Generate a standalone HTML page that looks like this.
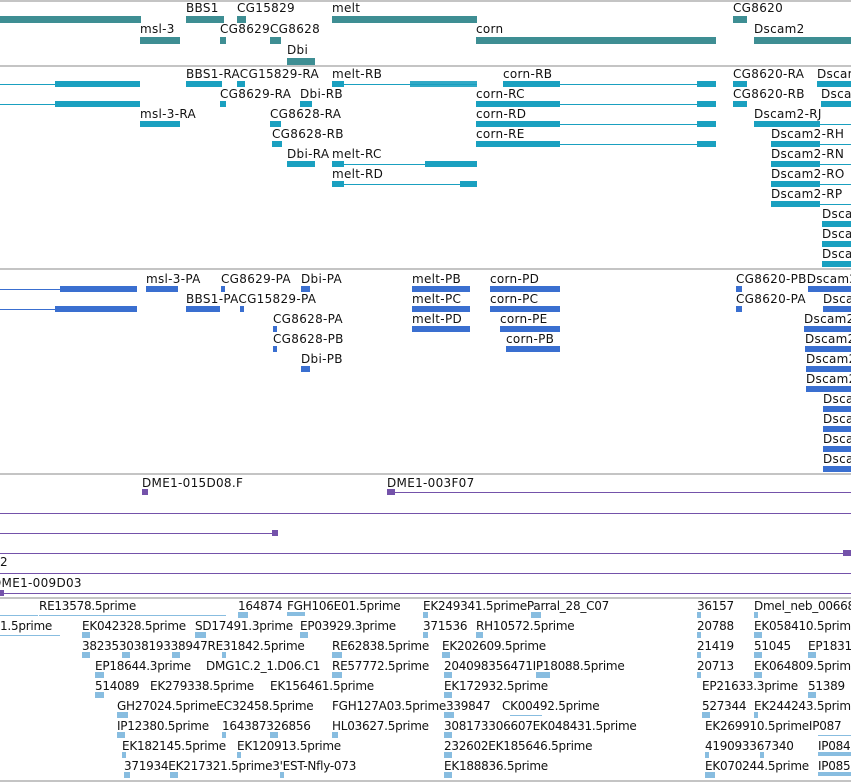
<!DOCTYPE html>
<html><head><meta charset="utf-8"><style>
body{margin:0;width:851px;height:782px;background:#fff;position:relative;overflow:hidden;font-family:"DejaVu Sans","Liberation Sans",sans-serif;font-size:12px;letter-spacing:0.3px;color:#111}
span{position:absolute;line-height:14px;white-space:nowrap}
.c span{font-size:12px;letter-spacing:-0.25px}
i{position:absolute;display:block}
.s{left:0;width:851px;height:2px;background:#c4c4c4}
.a{background:#3e8e93;height:7px}
.b{background:#1aa0c0;height:6px}
.bl{background:#1aa0c0;height:1px}
.p{background:#3a6fd0;height:6px}
.pl{background:#3a6fd0;height:1px}
.v{background:#7452aa;height:1px}
.e{background:#88bde0;height:6px}
.el{background:#88bde0;height:1px}
</style></head><body>
<i class="s" style="top:0"></i>
<!-- track1 -->
<i class="a" style="left:0;top:16px;width:141px"></i>
<span style="left:186px;top:1px">BBS1</span><i class="a" style="left:186px;top:16px;width:38px"></i>
<span style="left:237px;top:1px">CG15829</span><i class="a" style="left:237px;top:16px;width:9px"></i>
<span style="left:332px;top:1px">melt</span><i class="a" style="left:332px;top:16px;width:145px"></i>
<span style="left:733px;top:1px">CG8620</span><i class="a" style="left:733px;top:16px;width:14px"></i>
<span style="left:140px;top:22px">msl-3</span><i class="a" style="left:140px;top:37px;width:40px"></i>
<span style="left:220px;top:22px">CG8629</span><i class="a" style="left:220px;top:37px;width:6px"></i>
<span style="left:270px;top:22px">CG8628</span><i class="a" style="left:270px;top:37px;width:11px"></i>
<span style="left:476px;top:22px">corn</span><i class="a" style="left:476px;top:37px;width:240px"></i>
<span style="left:754px;top:22px">Dscam2</span><i class="a" style="left:754px;top:37px;width:97px"></i>
<span style="left:287px;top:43px">Dbi</span><i class="a" style="left:287px;top:58px;width:28px"></i>
<i class="s" style="top:65px"></i>
<!-- track2 -->
<i class="bl" style="left:0;top:84px;width:140px"></i><i class="b" style="left:55px;top:81px;width:85px"></i>
<span style="left:186px;top:67px">BBS1-RACG15829-RA</span><i class="b" style="left:186px;top:81px;width:36px"></i><i class="b" style="left:237px;top:81px;width:8px"></i>
<span style="left:332px;top:67px">melt-RB</span><i class="b" style="left:332px;top:81px;width:12px"></i><i class="bl" style="left:332px;top:84px;width:145px"></i><i class="b" style="left:410px;top:81px;width:67px;opacity:.9"></i>
<span style="left:503px;top:67px">corn-RB</span><i class="b" style="left:503px;top:81px;width:57px"></i><i class="bl" style="left:503px;top:84px;width:213px"></i><i class="b" style="left:697px;top:81px;width:19px"></i>
<span style="left:733px;top:67px">CG8620-RA</span><i class="b" style="left:733px;top:81px;width:14px"></i>
<span style="left:817px;top:67px">Dscam</span><i class="b" style="left:817px;top:81px;width:34px"></i>
<i class="bl" style="left:0;top:104px;width:140px"></i><i class="b" style="left:55px;top:101px;width:85px"></i>
<span style="left:220px;top:87px">CG8629-RA</span><i class="b" style="left:220px;top:101px;width:6px"></i>
<span style="left:300px;top:87px">Dbi-RB</span><i class="b" style="left:300px;top:101px;width:12px"></i>
<span style="left:476px;top:87px">corn-RC</span><i class="b" style="left:476px;top:101px;width:84px"></i><i class="bl" style="left:476px;top:104px;width:240px"></i><i class="b" style="left:697px;top:101px;width:19px"></i>
<span style="left:733px;top:87px">CG8620-RB</span><i class="b" style="left:733px;top:101px;width:14px"></i>
<span style="left:821px;top:87px">Dscam</span><i class="b" style="left:821px;top:101px;width:30px"></i>
<span style="left:140px;top:107px">msl-3-RA</span><i class="b" style="left:140px;top:121px;width:40px"></i>
<span style="left:270px;top:107px">CG8628-RA</span><i class="b" style="left:270px;top:121px;width:11px"></i>
<span style="left:476px;top:107px">corn-RD</span><i class="b" style="left:476px;top:121px;width:84px"></i><i class="bl" style="left:476px;top:124px;width:240px"></i><i class="b" style="left:697px;top:121px;width:19px"></i>
<span style="left:754px;top:107px">Dscam2-RJ</span><i class="b" style="left:754px;top:121px;width:66px"></i><i class="bl" style="left:754px;top:124px;width:97px"></i>
<span style="left:272px;top:127px">CG8628-RB</span><i class="b" style="left:272px;top:141px;width:10px"></i>
<span style="left:476px;top:127px">corn-RE</span><i class="b" style="left:476px;top:141px;width:84px"></i><i class="bl" style="left:476px;top:144px;width:240px"></i><i class="b" style="left:697px;top:141px;width:19px"></i>
<span style="left:771px;top:127px">Dscam2-RH</span><i class="b" style="left:771px;top:141px;width:49px"></i><i class="bl" style="left:771px;top:144px;width:80px"></i>
<span style="left:287px;top:147px">Dbi-RA</span><i class="b" style="left:287px;top:161px;width:28px"></i>
<span style="left:332px;top:147px">melt-RC</span><i class="b" style="left:332px;top:161px;width:12px"></i><i class="bl" style="left:332px;top:164px;width:145px"></i><i class="b" style="left:425px;top:161px;width:52px"></i>
<span style="left:771px;top:147px">Dscam2-RN</span><i class="b" style="left:771px;top:161px;width:49px"></i><i class="bl" style="left:771px;top:164px;width:80px"></i>
<span style="left:332px;top:167px">melt-RD</span><i class="b" style="left:332px;top:181px;width:12px"></i><i class="bl" style="left:332px;top:184px;width:145px"></i><i class="b" style="left:460px;top:181px;width:17px"></i>
<span style="left:771px;top:167px">Dscam2-RO</span><i class="b" style="left:771px;top:181px;width:49px"></i><i class="bl" style="left:771px;top:184px;width:80px"></i>
<span style="left:771px;top:187px">Dscam2-RP</span><i class="b" style="left:771px;top:201px;width:49px"></i><i class="bl" style="left:771px;top:204px;width:80px"></i>
<span style="left:822px;top:207px">Dsca</span><i class="b" style="left:822px;top:221px;width:29px"></i>
<span style="left:822px;top:227px">Dsca</span><i class="b" style="left:822px;top:241px;width:29px"></i>
<span style="left:822px;top:247px">Dsca</span><i class="b" style="left:822px;top:261px;width:29px"></i>
<i class="s" style="top:268px"></i>
<!-- track3 -->
<i class="pl" style="left:0;top:289px;width:137px"></i><i class="p" style="left:60px;top:286px;width:77px"></i>
<span style="left:146px;top:272px">msl-3-PA</span><i class="p" style="left:146px;top:286px;width:32px"></i>
<span style="left:221px;top:272px">CG8629-PA</span><i class="p" style="left:221px;top:286px;width:4px"></i>
<span style="left:301px;top:272px">Dbi-PA</span><i class="p" style="left:301px;top:286px;width:9px"></i>
<span style="left:412px;top:272px">melt-PB</span><i class="p" style="left:412px;top:286px;width:58px"></i>
<span style="left:490px;top:272px">corn-PD</span><i class="p" style="left:490px;top:286px;width:70px"></i>
<span style="left:736px;top:272px">CG8620-PBDscam2</span><i class="p" style="left:736px;top:286px;width:6px"></i><i class="p" style="left:808px;top:286px;width:43px"></i>
<i class="pl" style="left:0;top:309px;width:137px"></i><i class="p" style="left:55px;top:306px;width:82px"></i>
<span style="left:186px;top:292px">BBS1-PACG15829-PA</span><i class="p" style="left:186px;top:306px;width:34px"></i><i class="p" style="left:240px;top:306px;width:4px"></i>
<span style="left:412px;top:292px">melt-PC</span><i class="p" style="left:412px;top:306px;width:58px"></i>
<span style="left:490px;top:292px">corn-PC</span><i class="p" style="left:490px;top:306px;width:70px"></i>
<span style="left:736px;top:292px">CG8620-PA</span><i class="p" style="left:736px;top:306px;width:6px"></i>
<span style="left:823px;top:292px">Dsca</span><i class="p" style="left:823px;top:306px;width:28px"></i>
<span style="left:273px;top:312px">CG8628-PA</span><i class="p" style="left:273px;top:326px;width:4px"></i>
<span style="left:412px;top:312px">melt-PD</span><i class="p" style="left:412px;top:326px;width:58px"></i>
<span style="left:500px;top:312px">corn-PE</span><i class="p" style="left:500px;top:326px;width:60px"></i>
<span style="left:804px;top:312px">Dscam2</span><i class="p" style="left:804px;top:326px;width:47px"></i>
<span style="left:273px;top:332px">CG8628-PB</span><i class="p" style="left:273px;top:346px;width:4px"></i>
<span style="left:506px;top:332px">corn-PB</span><i class="p" style="left:506px;top:346px;width:54px"></i>
<span style="left:805px;top:332px">Dscam2</span><i class="p" style="left:805px;top:346px;width:46px"></i>
<span style="left:301px;top:352px">Dbi-PB</span><i class="p" style="left:301px;top:366px;width:9px"></i>
<span style="left:806px;top:352px">Dscam2</span><i class="p" style="left:806px;top:366px;width:45px"></i>
<span style="left:806px;top:372px">Dscam2</span><i class="p" style="left:806px;top:386px;width:45px"></i>
<span style="left:823px;top:392px">Dsca</span><i class="p" style="left:823px;top:406px;width:28px"></i>
<span style="left:823px;top:412px">Dsca</span><i class="p" style="left:823px;top:426px;width:28px"></i>
<span style="left:823px;top:432px">Dsca</span><i class="p" style="left:823px;top:446px;width:28px"></i>
<span style="left:823px;top:452px">Dsca</span><i class="p" style="left:823px;top:466px;width:28px"></i>
<i class="s" style="top:473px"></i>
<!-- purple -->
<span style="left:142px;top:476px">DME1-015D08.F</span><i class="v" style="left:142px;top:489px;width:6px;height:6px;background:#7452aa"></i>
<span style="left:387px;top:476px">DME1-003F07</span><i class="v" style="left:387px;top:489px;width:8px;height:6px"></i><i class="v" style="left:387px;top:492px;width:464px"></i>
<i class="v" style="left:0;top:513px;width:851px"></i>
<i class="v" style="left:0;top:533px;width:278px"></i><i class="v" style="left:272px;top:530px;width:6px;height:6px"></i>
<i class="v" style="left:0;top:553px;width:851px"></i><i class="v" style="left:843px;top:550px;width:8px;height:6px"></i>
<span style="left:0;top:555px">2</span>
<i class="v" style="left:0;top:573px;width:851px"></i>
<span style="left:-8px;top:576px">DME1-009D03</span>
<i class="v" style="left:0;top:593px;width:851px"></i><i class="v" style="left:0;top:590px;width:4px;height:6px"></i>
<i class="s" style="top:597px"></i>
<!-- EST -->
<div class="c">
<span style="left:39px;top:599px">RE13578.5prime</span><span style="left:238px;top:599px">164874</span><span style="left:287px;top:599px">FGH106E01.5prime</span><span style="left:423px;top:599px">EK249341.5primeParral_28_C07</span><span style="left:697px;top:599px">36157</span><span style="left:754px;top:599px">Dmel_neb_00668</span>
<span style="left:0;top:619px">1.5prime</span><span style="left:82px;top:619px">EK042328.5prime</span><span style="left:195px;top:619px">SD17491.3prime</span><span style="left:300px;top:619px">EP03929.3prime</span><span style="left:423px;top:619px">371536</span><span style="left:476px;top:619px">RH10572.5prime</span><span style="left:697px;top:619px">20788</span><span style="left:754px;top:619px">EK058410.5prime</span>
<span style="left:82px;top:639px">38235303819338947RE31842.5prime</span><span style="left:332px;top:639px">RE62838.5prime</span><span style="left:442px;top:639px">EK202609.5prime</span><span style="left:697px;top:639px">21419</span><span style="left:754px;top:639px">51045</span><span style="left:808px;top:639px">EP1831</span>
<span style="left:95px;top:659px">EP18644.3prime</span><span style="left:206px;top:659px">DMG1C.2_1.D06.C1</span><span style="left:332px;top:659px">RE57772.5prime</span><span style="left:444px;top:659px">204098356471IP18088.5prime</span><span style="left:697px;top:659px">20713</span><span style="left:754px;top:659px">EK064809.5prime</span>
<span style="left:95px;top:679px">514089</span><span style="left:150px;top:679px">EK279338.5prime</span><span style="left:270px;top:679px">EK156461.5prime</span><span style="left:444px;top:679px">EK172932.5prime</span><span style="left:702px;top:679px">EP21633.3prime</span><span style="left:808px;top:679px">51389</span>
<span style="left:117px;top:699px">GH27024.5primeEC32458.5prime</span><span style="left:332px;top:699px">FGH127A03.5prime339847</span><span style="left:502px;top:699px">CK00492.5prime</span><span style="left:702px;top:699px">527344</span><span style="left:754px;top:699px">EK244243.5prime</span>
<span style="left:117px;top:719px">IP12380.5prime</span><span style="left:222px;top:719px">164387326856</span><span style="left:332px;top:719px">HL03627.5prime</span><span style="left:444px;top:719px">308173306607EK048431.5prime</span><span style="left:705px;top:719px">EK269910.5primeIP087</span>
<span style="left:122px;top:739px">EK182145.5prime</span><span style="left:237px;top:739px">EK120913.5prime</span><span style="left:444px;top:739px">232602EK185646.5prime</span><span style="left:705px;top:739px">419093367340</span><span style="left:818px;top:739px">IP084</span>
<span style="left:124px;top:759px">371934EK217321.5prime3'EST-Nfly-073</span><span style="left:444px;top:759px">EK188836.5prime</span><span style="left:705px;top:759px">EK070244.5prime</span><span style="left:818px;top:759px">IP085</span>
</div>
<i class="el" style="left:0;top:615px;width:38px"></i><i class="el" style="left:39px;top:615px;width:187px"></i><i class="e" style="left:238px;top:612px;width:10px"></i><i class="e" style="left:287px;top:612px;width:18px;height:4px"></i><i class="e" style="left:423px;top:612px;width:5px"></i><i class="e" style="left:531px;top:612px;width:10px"></i><i class="e" style="left:697px;top:612px;width:4px"></i><i class="e" style="left:754px;top:612px;width:4px"></i>
<i class="el" style="left:0;top:635px;width:60px"></i><i class="e" style="left:82px;top:632px;width:8px"></i><i class="e" style="left:195px;top:632px;width:11px"></i><i class="e" style="left:300px;top:632px;width:8px"></i><i class="e" style="left:423px;top:632px;width:5px"></i><i class="e" style="left:476px;top:632px;width:7px"></i><i class="e" style="left:697px;top:632px;width:4px"></i><i class="e" style="left:754px;top:632px;width:8px"></i>
<i class="e" style="left:82px;top:652px;width:8px"></i><i class="e" style="left:122px;top:652px;width:8px"></i><i class="e" style="left:172px;top:652px;width:8px"></i><i class="e" style="left:222px;top:652px;width:4px"></i><i class="e" style="left:332px;top:652px;width:10px"></i><i class="e" style="left:442px;top:652px;width:8px"></i><i class="e" style="left:697px;top:652px;width:4px"></i><i class="e" style="left:754px;top:652px;width:8px"></i><i class="e" style="left:808px;top:652px;width:8px"></i>
<i class="e" style="left:95px;top:672px;width:9px"></i><i class="e" style="left:332px;top:672px;width:10px"></i><i class="e" style="left:444px;top:672px;width:8px"></i><i class="e" style="left:536px;top:672px;width:14px"></i><i class="e" style="left:697px;top:672px;width:4px"></i><i class="e" style="left:754px;top:672px;width:8px"></i>
<i class="e" style="left:95px;top:692px;width:9px"></i><i class="e" style="left:444px;top:692px;width:8px"></i><i class="e" style="left:808px;top:692px;width:8px"></i>
<i class="e" style="left:117px;top:712px;width:11px"></i><i class="e" style="left:444px;top:712px;width:10px"></i><i class="el" style="left:510px;top:715px;width:32px"></i><i class="e" style="left:702px;top:712px;width:8px"></i><i class="e" style="left:754px;top:712px;width:4px"></i>
<i class="e" style="left:117px;top:732px;width:8px"></i><i class="e" style="left:222px;top:732px;width:4px"></i><i class="e" style="left:270px;top:732px;width:8px"></i><i class="e" style="left:332px;top:732px;width:6px"></i><i class="e" style="left:444px;top:732px;width:8px"></i><i class="el" style="left:818px;top:735px;width:33px"></i>
<i class="e" style="left:122px;top:752px;width:4px"></i><i class="e" style="left:237px;top:752px;width:4px"></i><i class="e" style="left:444px;top:752px;width:8px"></i><i class="e" style="left:705px;top:752px;width:4px"></i><i class="e" style="left:760px;top:752px;width:4px"></i><i class="e" style="left:818px;top:752px;width:33px;height:4px"></i>
<i class="e" style="left:124px;top:772px;width:6px"></i><i class="e" style="left:170px;top:772px;width:8px"></i><i class="e" style="left:280px;top:772px;width:4px"></i><i class="e" style="left:444px;top:772px;width:8px"></i><i class="e" style="left:705px;top:772px;width:10px"></i><i class="e" style="left:818px;top:772px;width:33px;height:4px"></i>
<i class="s" style="top:780px"></i>
</body></html>
